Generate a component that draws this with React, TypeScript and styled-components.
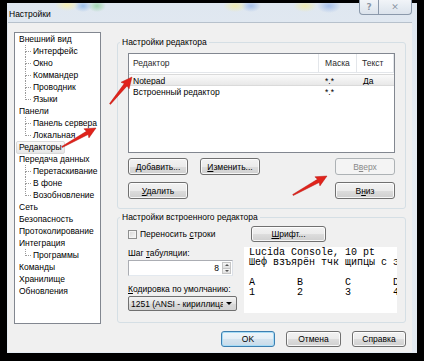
import React from 'react';
import styled, { createGlobalStyle } from 'styled-components';

type TreeNode = {
  label: string;
  selected?: boolean;
  children?: string[];
};

const treeData: TreeNode[] = [
  { label: 'Внешний вид', children: ['Интерфейс', 'Окно', 'Коммандер', 'Проводник', 'Языки'] },
  { label: 'Панели', children: ['Панель сервера', 'Локальная'] },
  { label: 'Редакторы', selected: true },
  { label: 'Передача данных', children: ['Перетаскивание', 'В фоне', 'Возобновление'] },
  { label: 'Сеть' },
  { label: 'Безопасность' },
  { label: 'Протоколирование' },
  { label: 'Интеграция', children: ['Программы'] },
  { label: 'Команды' },
  { label: 'Хранилище' },
  { label: 'Обновления' },
];

const editors = [
  { name: 'Notepad', mask: '*.*', text: 'Да', selected: true },
  { name: 'Встроенный редактор', mask: '*.*', text: '' },
];

const GlobalStyle = createGlobalStyle`
  html, body {
    margin: 0;
    padding: 0;
    background: #000;
  }
  body {
    width: 424px;
    height: 361px;
    overflow: hidden;
    font-family: "Liberation Sans", Arial, sans-serif;
    font-size: 8.5px;
    color: #000;
  }
`;

const Screen = styled.div`
  position: relative;
  width: 424px;
  height: 361px;
  padding: 3px 7px 0 7px;
  box-sizing: border-box;
`;

const Window = styled.div`
  width: 410px;
  height: 350px;
  display: flex;
  flex-direction: column;
  box-sizing: border-box;
  padding: 0 5px 1px 1px;
  background:
    radial-gradient(ellipse 12px 6px at 60px 2px, rgba(250, 240, 170, 0.9), transparent),
    radial-gradient(ellipse 9px 6px at 76px 3px, rgba(110, 165, 230, 0.6), transparent),
    radial-gradient(ellipse 9px 6px at 90px 3px, rgba(110, 200, 120, 0.55), transparent),
    radial-gradient(ellipse 12px 6px at 228px 3px, rgba(245, 235, 150, 0.7), transparent),
    radial-gradient(ellipse 10px 6px at 244px 3px, rgba(120, 160, 230, 0.55), transparent),
    radial-gradient(ellipse 12px 6px at 298px 3px, rgba(245, 235, 150, 0.7), transparent),
    radial-gradient(ellipse 12px 7px at 322px 3px, rgba(120, 160, 230, 0.55), transparent),
    linear-gradient(#dfe7f0, #e8eef4 40%, #e4ebf2);
`;

const TitleBar = styled.div`
  height: 19px;
  display: flex;
  align-items: flex-start;
`;

const Title = styled.div`
  margin: 6px 0 0 1px;
  line-height: 10px;
  color: #000;
`;

const CaptionButtons = styled.div`
  margin: -3px 0 0 auto;
  display: flex;
`;

const CaptionButton = styled.div<{ $wide?: boolean }>`
  width: ${(p) => (p.$wide ? 33 : 20)}px;
  height: 15px;
  box-sizing: border-box;
  display: flex;
  align-items: center;
  justify-content: center;
  border: 1px solid #8b99ab;
  border-top: none;
  border-left-width: ${(p) => (p.$wide ? 0 : 1)}px;
  border-radius: ${(p) => (p.$wide ? '0 0 4px 0' : '0 0 0 4px')};
  background: linear-gradient(#f1f4f8, #dbe3ec);
  color: #8a96a6;
  font-family: "DejaVu Sans", sans-serif;
  font-size: 9px;
  font-weight: bold;
  text-shadow: 0 0 1px #fff;
`;

const Client = styled.div`
  flex: 1;
  display: flex;
  flex-direction: column;
  background: #f0f0f0;
  border-top: 1px solid #b7c1cc;
  padding: 9px 6px 5px 6px;
`;

const MainRow = styled.div`
  display: flex;
  gap: 16px;
`;

const Tree = styled.div`
  width: 87px;
  height: 292px;
  box-sizing: border-box;
  border: 1px solid #828790;
  background: #fff;
`;

const TreeItem = styled.div<{ $child?: boolean; $last?: boolean }>`
  position: relative;
  height: 12px;
  line-height: 12px;
  padding-left: ${(p) => (p.$child ? 15 : 1)}px;
  white-space: nowrap;

  &::before {
    content: ${(p) => (p.$child ? "''" : 'none')};
    position: absolute;
    left: 10px;
    top: 0;
    width: 5px;
    height: 6px;
    border-left: 1px dotted #9a9a9a;
    border-bottom: 1px dotted #9a9a9a;
  }
  &::after {
    content: ${(p) => (p.$child && !p.$last ? "''" : 'none')};
    position: absolute;
    left: 10px;
    top: 6px;
    bottom: 0;
    border-left: 1px dotted #9a9a9a;
  }
`;

const TreeLabel = styled.span<{ $selected?: boolean }>`
  display: inline-block;
  height: 11px;
  line-height: 11px;
  padding: 0 2px;
  border: 1px solid ${(p) => (p.$selected ? '#d9d9d9' : 'transparent')};
  border-radius: 2px;
  background: ${(p) => (p.$selected ? 'linear-gradient(#f9f9f9, #e6e6e6)' : 'none')};
  vertical-align: top;
`;

const RightColumn = styled.div`
  width: 289px;
  display: flex;
  flex-direction: column;
`;

const Group = styled.fieldset<{ $top: number }>`
  margin: ${(p) => p.$top}px 0 0;
  padding: 0 10px 9px;
  border: 1px solid #d5dfe5;
  border-radius: 3px;
  min-width: 0;
`;

const Legend = styled.legend`
  padding: 0 2px;
  margin-left: -8px;
  line-height: 10px;
  color: #000;
`;

const ListView = styled.div`
  margin-top: 6px;
  height: 100px;
  box-sizing: border-box;
  border: 1px solid #828790;
  background: #fff;
`;

const ListRow = styled.div<{ $header?: boolean; $selected?: boolean }>`
  display: grid;
  grid-template-columns: 190px 38px 1fr;
  height: ${(p) => (p.$header ? 19 : 12)}px;
  line-height: ${(p) => (p.$header ? 19 : 12)}px;
  box-sizing: border-box;
  border-bottom: 1px solid ${(p) => (p.$header ? '#e3e6ea' : p.$selected ? '#dadada' : 'transparent')};
  border-top: ${(p) => (p.$selected ? '1px solid #dadada' : 'none')};
  margin-bottom: ${(p) => (p.$header ? 1 : 0)}px;
  background: ${(p) => (p.$selected ? 'linear-gradient(#fafafa, #e8e8e8)' : '#fff')};
  color: ${(p) => (p.$header ? '#2b2b2b' : '#000')};
`;

const Cell = styled.div<{ $pad: number; $sep?: boolean }>`
  padding-left: ${(p) => p.$pad}px;
  border-right: 1px solid ${(p) => (p.$sep ? '#e3e6ea' : 'transparent')};
  overflow: hidden;
  white-space: nowrap;
`;

const ButtonGrid = styled.div`
  margin-top: 5px;
  display: grid;
  grid-template-columns: 60px 60px 1fr 60px;
  grid-auto-rows: 17px;
  column-gap: 12px;
  row-gap: 7px;
`;

const Button = styled.button<{ $col?: number; $row?: number; $w?: number; $default?: boolean }>`
  grid-column: ${(p) => p.$col ?? 'auto'};
  grid-row: ${(p) => p.$row ?? 'auto'};
  width: ${(p) => (p.$w ? `${p.$w}px` : 'auto')};
  height: ${(p) => (p.$w ? 16 : 17)}px;
  padding: 0;
  box-sizing: border-box;
  font: inherit;
  color: #000;
  border: 1px solid ${(p) => (p.$default ? '#3c7fb1' : '#707070')};
  border-radius: 3px;
  background: ${(p) =>
    p.$default
      ? 'linear-gradient(#eef5fa 0%, #e4eef6 50%, #d5e4ef 51%, #c9dbe9 100%)'
      : 'linear-gradient(#f2f2f2 0%, #ebebeb 50%, #dddddd 51%, #cfcfcf 100%)'};
  box-shadow: inset 0 0 0 1px ${(p) => (p.$default ? '#a7dcf6' : 'rgba(255, 255, 255, 0.8)')};

  &:disabled {
    border-color: #adb2b5;
    background: #f4f4f4;
    color: #8a8a8a;
    box-shadow: none;
  }
`;

const FontButton = styled(Button)`
  margin: 4px 0 0 7px;
`;

const Group2Body = styled.div`
  display: grid;
  grid-template-columns: 109px 153px;
  column-gap: 7px;
`;

const LeftStack = styled.div`
  display: flex;
  flex-direction: column;
`;

const CheckRow = styled.label`
  margin-top: 6px;
  height: 12px;
  display: flex;
  align-items: center;
  gap: 3px;
`;

const CheckBox = styled.span`
  width: 9px;
  height: 9px;
  box-sizing: border-box;
  border: 1px solid #8e8f8f;
  background: linear-gradient(135deg, #d6d6d6, #f8f8f8);
  box-shadow: inset 0 0 0 1px #f4f4f4;
`;

const FieldLabel = styled.div`
  margin-top: 8px;
  height: 10px;
  line-height: 10px;
`;

const SpinBox = styled.div`
  margin-top: 2px;
  width: 105px;
  height: 16px;
  box-sizing: border-box;
  border: 1px solid #abadb3;
  border-right-color: #dbdfe6;
  border-bottom-color: #e3e9ef;
  background: #fff;
  display: flex;
  align-items: center;
  justify-content: flex-end;
  gap: 3px;
  padding-right: 1px;
`;

const SpinButtons = styled.div`
  width: 9px;
  height: 12px;
  display: flex;
  flex-direction: column;
`;

const SpinHalf = styled.div<{ $down?: boolean }>`
  flex: 1;
  display: flex;
  align-items: center;
  justify-content: center;
  border: 1px solid #c5c5c5;
  border-top-width: ${(p) => (p.$down ? 0 : 1)}px;
  background: linear-gradient(#f6f6f6, #dedede);

  &::after {
    content: '';
    border-left: 2px solid transparent;
    border-right: 2px solid transparent;
    ${(p) => (p.$down ? 'border-top: 2px solid #555;' : 'border-bottom: 2px solid #555;')}
  }
`;

const Combo = styled.div`
  margin-top: 2px;
  width: 109px;
  height: 15px;
  box-sizing: border-box;
  border: 1px solid #707070;
  border-radius: 2px;
  background: linear-gradient(#f3f3f3, #e3e3e3 50%, #d9d9d9 51%, #d2d2d2);
  display: flex;
  align-items: center;
  padding: 0 4px 0 2px;
  gap: 3px;
`;

const ComboText = styled.span`
  flex: 1;
  overflow: hidden;
  white-space: nowrap;
`;

const ComboArrow = styled.span`
  border-left: 3px solid transparent;
  border-right: 3px solid transparent;
  border-top: 3px solid #000;
`;

const RightStack = styled.div`
  display: flex;
  flex-direction: column;
`;

const Preview = styled.div`
  margin-top: 5px;
  height: 66px;
  background: #fff;
  padding: 1px 0 0 5px;
  box-sizing: border-box;
  overflow: hidden;
  white-space: pre;
  font-family: "Liberation Mono", "DejaVu Sans Mono", monospace;
  font-size: 10px;
  line-height: 10px;
  color: #000;
`;

const DialogButtons = styled.div`
  margin-top: 7px;
  display: flex;
  justify-content: flex-end;
  gap: 11px;
`;

const Overlay = styled.svg`
  position: absolute;
  left: 0;
  top: 0;
  pointer-events: none;
`;

const U = styled.span`
  text-decoration: underline;
`;

const Arrow = ({ x1, y1, x2, y2 }: { x1: number; y1: number; x2: number; y2: number }) => {
  const len = Math.hypot(x2 - x1, y2 - y1);
  const ang = (Math.atan2(y2 - y1, x2 - x1) * 180) / Math.PI;
  const h = 11;
  const pts = [
    [0, -0.6],
    [len - h + 1, -1.8],
    [len - h, -5.2],
    [len, 0],
    [len - h, 5.2],
    [len - h + 1, 1.8],
    [0, 0.6],
  ]
    .map((p) => p.join(','))
    .join(' ');
  return (
    <g transform={`translate(${x1} ${y1}) rotate(${ang})`}>
      <polygon points={pts} fill="#e1231b" stroke="#b3150f" strokeWidth="0.4" />
    </g>
  );
};

export default function App() {
  return (
    <>
      <GlobalStyle />
      <Screen>
        <Window>
          <TitleBar>
            <Title>Настройки</Title>
            <CaptionButtons>
              <CaptionButton>?</CaptionButton>
              <CaptionButton $wide>✕</CaptionButton>
            </CaptionButtons>
          </TitleBar>
          <Client>
            <MainRow>
              <Tree>
                {treeData.map((node) => (
                  <React.Fragment key={node.label}>
                    <TreeItem>
                      <TreeLabel $selected={node.selected}>{node.label}</TreeLabel>
                    </TreeItem>
                    {node.children?.map((c, i) => (
                      <TreeItem key={c} $child $last={i === node.children!.length - 1}>
                        <TreeLabel>{c}</TreeLabel>
                      </TreeItem>
                    ))}
                  </React.Fragment>
                ))}
              </Tree>
              <RightColumn>
                <Group $top={5}>
                  <Legend>Настройки редактора</Legend>
                  <ListView>
                    <ListRow $header>
                      <Cell $pad={4} $sep>Редактор</Cell>
                      <Cell $pad={6} $sep>Маска</Cell>
                      <Cell $pad={5} $sep>Текст</Cell>
                    </ListRow>
                    {editors.map((e) => (
                      <ListRow key={e.name} $selected={e.selected}>
                        <Cell $pad={4}>{e.name}</Cell>
                        <Cell $pad={6}>{e.mask}</Cell>
                        <Cell $pad={6}>{e.text}</Cell>
                      </ListRow>
                    ))}
                  </ListView>
                  <ButtonGrid>
                    <Button $col={1} $row={1}>
                      <U>Д</U>обавить...
                    </Button>
                    <Button $col={2} $row={1}>
                      <U>И</U>зменить...
                    </Button>
                    <Button $col={4} $row={1} disabled>
                      В<U>в</U>ерх
                    </Button>
                    <Button $col={1} $row={2}>
                      <U>У</U>далить
                    </Button>
                    <Button $col={4} $row={2}>
                      В<U>н</U>из
                    </Button>
                  </ButtonGrid>
                </Group>
                <Group $top={3}>
                  <Legend>Настройки встроенного редактора</Legend>
                  <Group2Body>
                    <LeftStack>
                      <CheckRow>
                        <CheckBox />
                        <span>
                          Переносить <U>с</U>троки
                        </span>
                      </CheckRow>
                      <FieldLabel>
                        Шаг <U>т</U>абуляции:
                      </FieldLabel>
                      <SpinBox>
                        <span>8</span>
                        <SpinButtons>
                          <SpinHalf />
                          <SpinHalf $down />
                        </SpinButtons>
                      </SpinBox>
                      <FieldLabel>
                        <U>К</U>одировка по умолчанию:
                      </FieldLabel>
                      <Combo>
                        <ComboText>1251 (ANSI - кириллица)</ComboText>
                        <ComboArrow />
                      </Combo>
                    </LeftStack>
                    <RightStack>
                      <FontButton $w={75}>
                        <U>Ш</U>рифт...
                      </FontButton>
                      <Preview>
                        {'Lucida Console, 10 pt\nШеф взъярён тчк щипцы с эхом гудбай Жюль\n\nA       B       C       D\n1       2       3       4'}
                      </Preview>
                    </RightStack>
                  </Group2Body>
                </Group>
              </RightColumn>
            </MainRow>
            <DialogButtons>
              <Button $w={54} $default>
                OK
              </Button>
              <Button $w={55}>Отмена</Button>
              <Button $w={54}>Справка</Button>
            </DialogButtons>
          </Client>
        </Window>
        <Overlay width="424" height="361" viewBox="0 0 424 361">
          <Arrow x1={62} y1={147} x2={96} y2={128} />
          <Arrow x1={110} y1={104} x2={132} y2={77} />
          <Arrow x1={293} y1={195} x2={327} y2={176} />
        </Overlay>
      </Screen>
    </>
  );
}
